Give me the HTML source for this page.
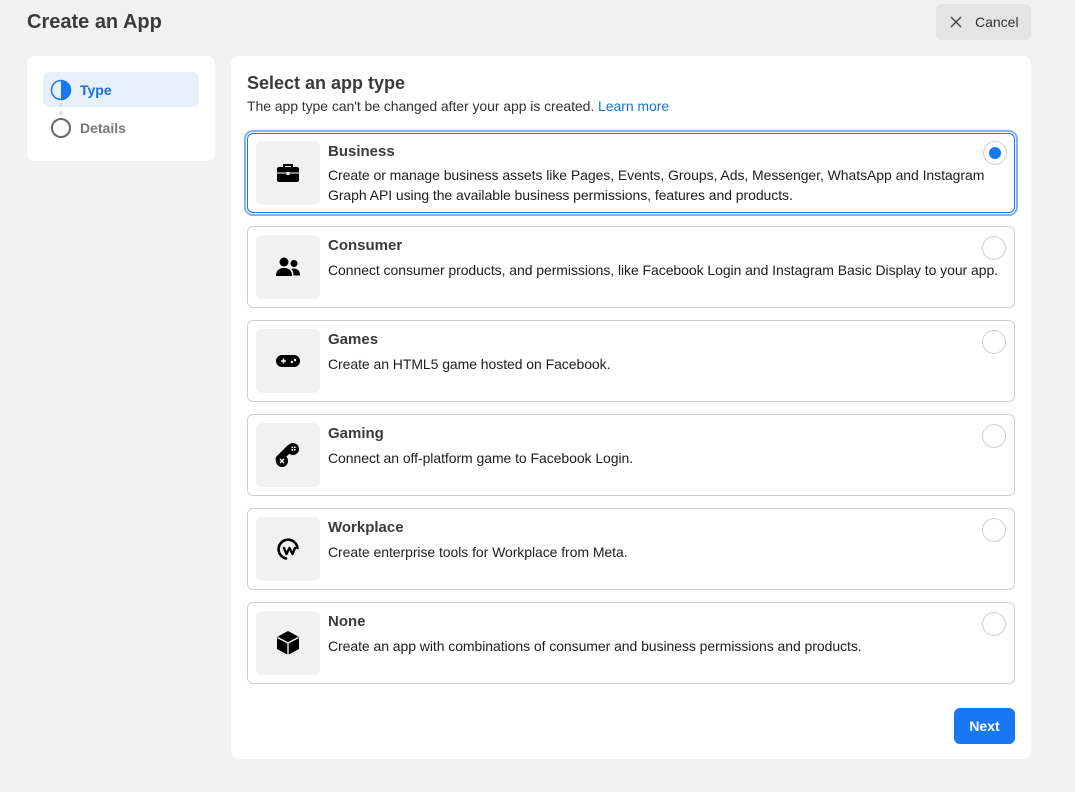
<!DOCTYPE html>
<html><head><style>
*{box-sizing:border-box;margin:0;padding:0}
body{width:1075px;height:792px;background:#f1f1f1;font-family:"Liberation Sans",Helvetica,Arial,sans-serif;color:#1c1e21;position:relative;overflow:hidden}
.abs{position:absolute}
h1{position:absolute;left:27px;top:11px;font-size:20px;font-weight:bold;color:#3a3b3c}
.cancel{left:936px;top:4px;width:95px;height:36px;background:#e4e4e4;border-radius:6px;font-size:14px;color:#333;display:flex;align-items:center;padding-left:13px}
.card{background:#fff;border-radius:8px}
.opt{position:absolute;left:247px;width:768px;height:82px;border:1px solid #ccd0d5;border-radius:6px;background:#fff}
.opt.sel{border:1px solid #1877f2;box-shadow:0 0 0 1px #fff,0 0 0 3px #7fb2f5}
.ib{position:absolute;left:8px;top:8px;width:64px;height:64px;background:#f1f1f1;border-radius:6px;display:flex;align-items:center;justify-content:center}
.t{position:absolute;left:80px;top:10px;font-size:15px;font-weight:bold;color:#3a3b3c}
.d{position:absolute;left:80px;top:33px;font-size:14px;line-height:20px;color:#1c1e21;width:680px;letter-spacing:-0.06px}
.r{position:absolute;right:8px;top:9px;width:24px;height:24px;border:1px solid #ccd0d5;border-radius:50%}
.r.on::after{content:"";position:absolute;left:5px;top:5px;width:12px;height:12px;border-radius:50%;background:#1877f2}
</style></head><body>
<h1>Create an App</h1>
<div class="abs cancel"><svg width="14" height="14" viewBox="0 0 14 14" style="margin-right:12px"><path d="M2 2L12 12M12 2L2 12" stroke="#444" stroke-width="1.4"/></svg>Cancel</div>

<div class="abs card" style="left:27px;top:56px;width:188px;height:105px"></div>
<div class="abs" style="left:43px;top:72px;width:156px;height:35px;background:#e7f0fa;border-radius:6px"></div>
<svg class="abs" style="left:50px;top:79px" width="22" height="22" viewBox="0 0 22 22"><circle cx="11" cy="11" r="9.5" fill="none" stroke="#1877f2" stroke-width="1.5"/><path d="M11 1.5A9.5 9.5 0 0 1 11 20.5Z" fill="#1877f2"/></svg>
<div class="abs" style="left:80px;top:82px;font-size:14px;font-weight:bold;color:#1a6ed8">Type</div>
<div class="abs" style="left:59px;top:103px;width:4px;height:4px;border-radius:2px;background:#ddd"></div>
<div class="abs" style="left:59px;top:111px;width:4px;height:4px;border-radius:2px;background:#ddd"></div>
<div class="abs" style="left:51px;top:118px;width:20px;height:20px;border:2px solid #606770;border-radius:50%"></div>
<div class="abs" style="left:80px;top:120px;font-size:14px;font-weight:bold;color:#777">Details</div>

<div class="abs card" style="left:231px;top:56px;width:800px;height:703px"></div>
<div class="abs" style="left:247px;top:73px;font-size:18px;font-weight:bold;color:#3a3b3c">Select an app type</div>
<div class="abs" style="left:247px;top:98px;font-size:14px;color:#333;letter-spacing:-0.06px">The app type can't be changed after your app is created. <span style="color:#1870d5">Learn more</span></div>

<div class="opt sel" style="top:133px;height:80px"><div class="ib" style="top:7px"><svg width="24" height="20" viewBox="0 0 24 20"><path d="M8 4V2h8v2" fill="none" stroke="#000" stroke-width="2"/><rect x="1" y="4" width="22" height="15" rx="2" fill="#000"/><rect x="10.5" y="9" width="3" height="3" fill="#fff"/><path d="M1 10h22" stroke="#fff" stroke-width="1"/></svg></div><div class="t" style="top:9px">Business</div><div class="d" style="top:31px">Create or manage business assets like Pages, Events, Groups, Ads, Messenger, WhatsApp and Instagram Graph API using the available business permissions, features and products.</div><div class="r on" style="top:7px;right:7px"></div></div>

<div class="opt" style="top:226px"><div class="ib"><svg width="26" height="22" viewBox="0 0 26 22"><circle cx="9" cy="6" r="4.5" fill="#000"/><circle cx="19" cy="7.5" r="3.5" fill="#000"/><path d="M1 20c0-6 3.5-8 8-8s8 2 8 8z" fill="#000"/><path d="M18 12.5c4 0 7 1.5 7 7h-6.5c0-3-0.5-5-2.5-6.5z" fill="#000"/></svg></div><div class="t">Consumer</div><div class="d">Connect consumer products, and permissions, like Facebook Login and Instagram Basic Display to your app.</div><div class="r"></div></div>

<div class="opt" style="top:320px"><div class="ib"><svg width="26" height="14" viewBox="0 0 26 14"><rect x="1" y="1" width="24" height="12" rx="6" fill="#000"/><path d="M6 7h5M8.5 4.5v5" stroke="#fff" stroke-width="1.5"/><circle cx="17" cy="8" r="1.2" fill="#fff"/><circle cx="20" cy="6" r="1.2" fill="#fff"/></svg></div><div class="t">Games</div><div class="d">Create an HTML5 game hosted on Facebook.</div><div class="r"></div></div>

<div class="opt" style="top:414px"><div class="ib"><svg width="26" height="26" viewBox="0 0 26 26"><path d="M4 17L15 6" stroke="#000" stroke-width="7" stroke-linecap="round"/><circle cx="18" cy="7" r="6" fill="#000"/><circle cx="7" cy="19" r="6" fill="#000"/><g fill="#fff"><rect x="16.5" y="4.5" width="1.6" height="1.6"/><rect x="19" y="4.5" width="1.6" height="1.6"/><rect x="16.5" y="7" width="1.6" height="1.6"/><rect x="19" y="7" width="1.6" height="1.6"/></g><path d="M5 17l4 4M9 17l-4 4" stroke="#fff" stroke-width="1.4"/></svg></div><div class="t">Gaming</div><div class="d">Connect an off-platform game to Facebook Login.</div><div class="r"></div></div>

<div class="opt" style="top:508px"><div class="ib"><svg width="24" height="24" viewBox="0 0 24 24"><path d="M10 21.5A9.5 9.5 0 1 1 21.5 11" fill="none" stroke="#000" stroke-width="2.6" stroke-linecap="round"/><path d="M8 11l2.5 6 3-6 3 6 2.5-6" fill="none" stroke="#000" stroke-width="2.4" stroke-linecap="round" stroke-linejoin="round"/></svg></div><div class="t">Workplace</div><div class="d">Create enterprise tools for Workplace from Meta.</div><div class="r"></div></div>

<div class="opt" style="top:602px"><div class="ib"><svg width="24" height="26" viewBox="0 0 24 26"><path d="M12 1L23 7v12l-11 6L1 19V7z" fill="#000"/><path d="M1.5 7.5L12 13l10.5-5.5M12 13v12" stroke="#fff" stroke-width="1.3" fill="none"/></svg></div><div class="t">None</div><div class="d">Create an app with combinations of consumer and business permissions and products.</div><div class="r"></div></div>

<div class="abs" style="left:954px;top:708px;width:61px;height:36px;background:#1877f2;border-radius:6px;color:#fff;font-size:14px;font-weight:bold;display:flex;align-items:center;justify-content:center">Next</div>
</body></html>
